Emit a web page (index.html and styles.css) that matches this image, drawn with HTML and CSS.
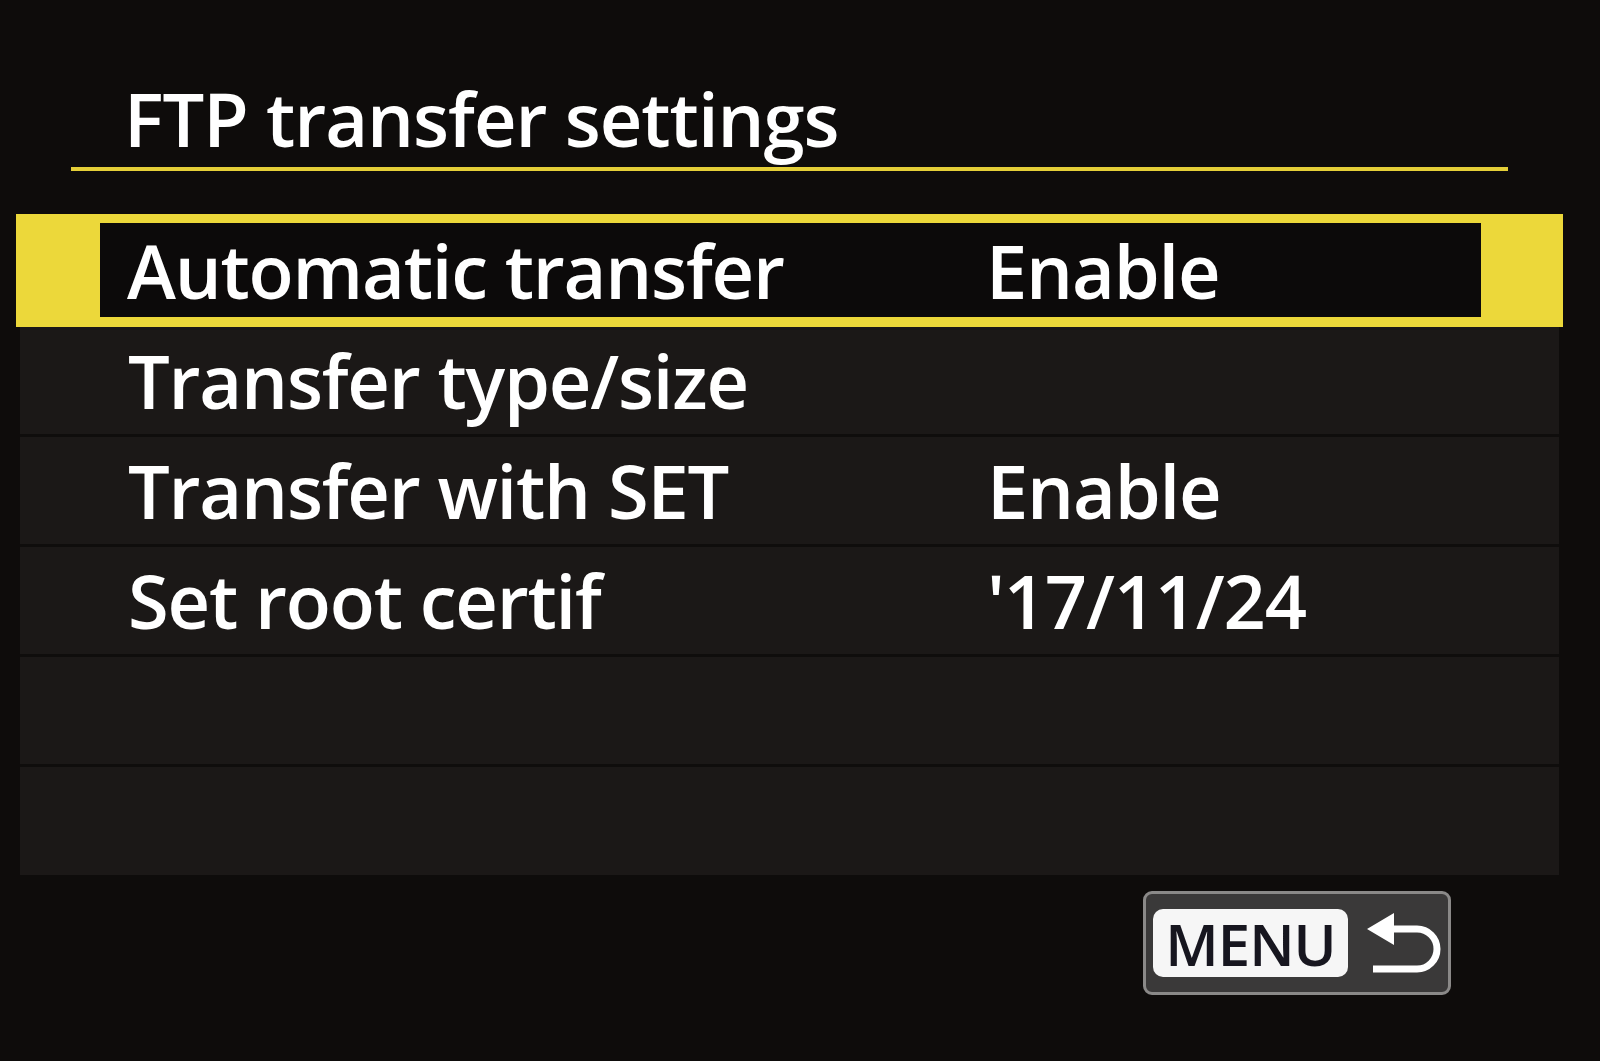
FILE: index.html
```html
<!DOCTYPE html>
<html lang="en">
<head>
    <meta charset="UTF-8">
    <meta name="viewport" content="width=device-width, initial-scale=1.0">
    <title>FTP transfer settings</title>
    <link rel="stylesheet" href="styles.css">
</head>
<body>
    <div class="screen">
        <h1 class="title">FTP transfer settings</h1>
        <div class="rule"></div>

        <ul class="menu-list">
            <li class="item selected">
                <div class="item-inner">
                    <span class="label">Automatic transfer</span>
                    <span class="value">Enable</span>
                </div>
            </li>
            <li class="item">
                <span class="label">Transfer type/size</span>
                <span class="value"></span>
            </li>
            <li class="item">
                <span class="label">Transfer with SET</span>
                <span class="value">Enable</span>
            </li>
            <li class="item">
                <span class="label">Set root certif</span>
                <span class="value">'17/11/24</span>
            </li>
            <li class="item empty"></li>
            <li class="item empty last"></li>
        </ul>

        <div class="footer">
            <div class="menu-btn">
                <span class="menu-key">MENU</span>
                <svg class="back-icon" width="74" height="62" viewBox="0 0 74 62">
                    <polygon points="0,17 27,1 27,33" fill="#fff"/>
                    <path d="M24 17 H50 A20 20 0 0 1 50 57 H6" fill="none" stroke="#fff" stroke-width="7"/>
                </svg>
            </div>
        </div>
    </div>
</body>
</html>
```

FILE: styles.css
```css
body {
    margin: 0;
    padding: 0;
    background: #0e0c0b;
    font-family: "Open Sans", "Noto Sans", sans-serif;
    color: #fff;
}
.screen {
    width: 1600px;
    height: 1061px;
    overflow: hidden;
}
.title {
    margin: 0;
    padding: 81px 0 0 124px;
    font-size: 74px;
    font-weight: 600;
    line-height: 75px;
    letter-spacing: -1px;
}
.rule {
    margin: 11px 0 0 71px;
    width: 1437px;
    height: 4px;
    background: #e4cf38;
}
.menu-list {
    list-style: none;
    margin: 43px 0 0 16px;
    padding: 0;
    width: 1547px;
}
.item {
    display: flex;
    margin: 0 4px;
    height: 107px;
    line-height: 107px;
    padding-left: 108px;
    background: #1b1817;
    border-bottom: 3px solid #0f0d0c;
    font-size: 74px;
    font-weight: 600;
    letter-spacing: -1.2px;
}
.item.last {
    border-bottom: none;
    height: 108px;
}
.label {
    flex: 0 0 859px;
}
.item.selected {
    margin: 0;
    padding: 9px 82px 10px 84px;
    height: 94px;
    background: #ecd83a;
    border-bottom: none;
}
.item-inner {
    display: flex;
    flex: 1;
    height: 94px;
    line-height: 95px;
    padding-left: 27px;
    background: #0c0a0a;
}
.footer {
    display: flex;
    justify-content: flex-end;
    padding: 16px 149px 0 0;
}
.menu-btn {
    display: flex;
    align-items: center;
    gap: 19px;
    box-sizing: border-box;
    width: 308px;
    height: 104px;
    padding-left: 7px;
    background: #3a3939;
    border: 3px solid #8a8988;
    border-radius: 9px;
}
.menu-key {
    display: block;
    width: 195px;
    height: 68px;
    line-height: 70px;
    text-align: center;
    background: #f6f6f6;
    border-radius: 10px;
    color: #17161f;
    font-size: 58px;
    font-weight: 600;
    letter-spacing: -1px;
}
.back-icon {
    display: block;
}
```
